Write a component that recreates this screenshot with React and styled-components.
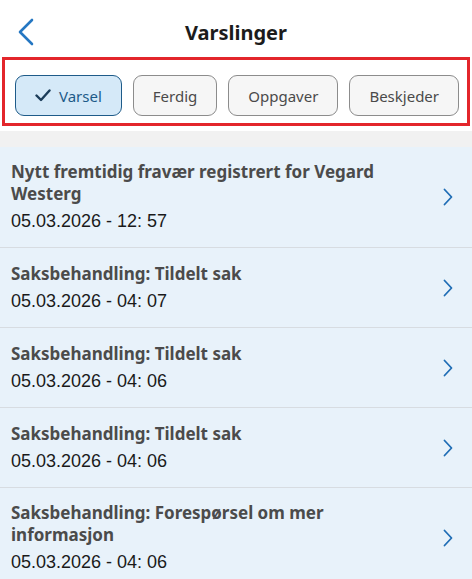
import React from "react";
import styled, { createGlobalStyle } from "styled-components";

const GlobalStyle = createGlobalStyle`
  html, body {
    margin: 0;
    padding: 0;
    background: #ffffff;
  }
  * { box-sizing: border-box; }
`;

const Page = styled.div`
  width: 472px;
  min-height: 579px;
  background: #ffffff;
  font-family: "Noto Sans", "Open Sans", sans-serif;
  overflow: hidden;
`;

const Header = styled.header`
  position: relative;
  height: 57px;
  display: flex;
  align-items: center;
  justify-content: center;
  padding-top: 8px;
`;

const BackButton = styled.button`
  position: absolute;
  left: 14px;
  top: 16px;
  width: 24px;
  height: 32px;
  padding: 0;
  border: none;
  background: none;
  display: flex;
  align-items: center;
  justify-content: center;
`;

const Title = styled.h1`
  margin: 0;
  font-size: 20px;
  font-weight: 700;
  color: #1c1c1c;
  line-height: 1;
`;

const FilterBar = styled.div`
  margin: 0 2px;
  border: 3px solid #e3262b;
  display: flex;
  gap: 11px;
  padding: 15px 8px 7px 10px;
`;

const Chip = styled.button`
  flex: none;
  height: 41px;
  padding: 0 19px;
  border-radius: 9px;
  display: flex;
  align-items: center;
  justify-content: center;
  gap: 8px;
  font-family: "Noto Sans", "Open Sans", sans-serif;
  font-size: 15px;
  border: 1px solid ${(p) => (p.$active ? "#1e5b89" : "#8c8c8c")};
  background: ${(p) => (p.$active ? "#d5e9f8" : "#f6f6f6")};
  color: ${(p) => (p.$active ? "#1e5b89" : "#4a4a4a")};
`;

const Spacer = styled.div`
  height: 5px;
`;

const GreyBand = styled.div`
  height: 16px;
  background: #f1f1f1;
`;

const List = styled.ul`
  list-style: none;
  margin: 0;
  padding: 0;
`;

const Item = styled.li`
  display: flex;
  align-items: center;
  min-height: 80px;
  background: #e8f2fa;
  border-bottom: 1px solid #d7dce1;
  padding: 14px 18px 14px 11px;
`;

const Texts = styled.div`
  flex: 1;
  max-width: 415px;
`;

const ItemTitle = styled.div`
  font-family: "Noto Sans", "Open Sans", sans-serif;
  font-weight: 700;
  font-size: 17px;
  line-height: 22px;
  color: #4b4b4b;
`;

const ItemDate = styled.div`
  margin-top: 4px;
  font-family: "Liberation Sans", Arial, sans-serif;
  font-size: 18px;
  line-height: 24px;
  color: #1a1a1a;
`;

const Chevron = () => (
  <svg width="12" height="18" viewBox="0 0 12 18" style={{ marginLeft: "auto", flex: "none" }}>
    <path d="M2.5 1.5 L9.5 9 L2.5 16.5" fill="none" stroke="#1f6db5" strokeWidth="1.8" strokeLinecap="round" strokeLinejoin="round" />
  </svg>
);

const filters = [
  { label: "Varsel", active: true },
  { label: "Ferdig" },
  { label: "Oppgaver" },
  { label: "Beskjeder" },
];

const notices = [
  { title: "Nytt fremtidig fravær registrert for Vegard Westerg", date: "05.03.2026 - 12: 57" },
  { title: "Saksbehandling: Tildelt sak", date: "05.03.2026 - 04: 07" },
  { title: "Saksbehandling: Tildelt sak", date: "05.03.2026 - 04: 06" },
  { title: "Saksbehandling: Tildelt sak", date: "05.03.2026 - 04: 06" },
  { title: "Saksbehandling: Forespørsel om mer informasjon", date: "05.03.2026 - 04: 06" },
];

export default function App() {
  return (
    <Page>
      <GlobalStyle />
      <Header>
        <BackButton aria-label="Tilbake">
          <svg width="18" height="28" viewBox="0 0 18 28">
            <path d="M15 2 L3 14 L15 26" fill="none" stroke="#2577c2" strokeWidth="2.6" strokeLinecap="round" strokeLinejoin="round" />
          </svg>
        </BackButton>
        <Title>Varslinger</Title>
      </Header>
      <FilterBar>
        {filters.map((f) => (
          <Chip key={f.label} $active={f.active}>
            {f.active && (
              <svg width="16" height="13" viewBox="0 0 16 13">
                <path d="M1.5 6.5 L6 11 L14.5 1.5" fill="none" stroke="#1c3d5a" strokeWidth="2.4" strokeLinecap="round" strokeLinejoin="round" />
              </svg>
            )}
            {f.label}
          </Chip>
        ))}
      </FilterBar>
      <Spacer />
      <GreyBand />
      <List>
        {notices.map((n, i) => (
          <Item key={i}>
            <Texts>
              <ItemTitle>{n.title}</ItemTitle>
              <ItemDate>{n.date}</ItemDate>
            </Texts>
            <Chevron />
          </Item>
        ))}
      </List>
    </Page>
  );
}
